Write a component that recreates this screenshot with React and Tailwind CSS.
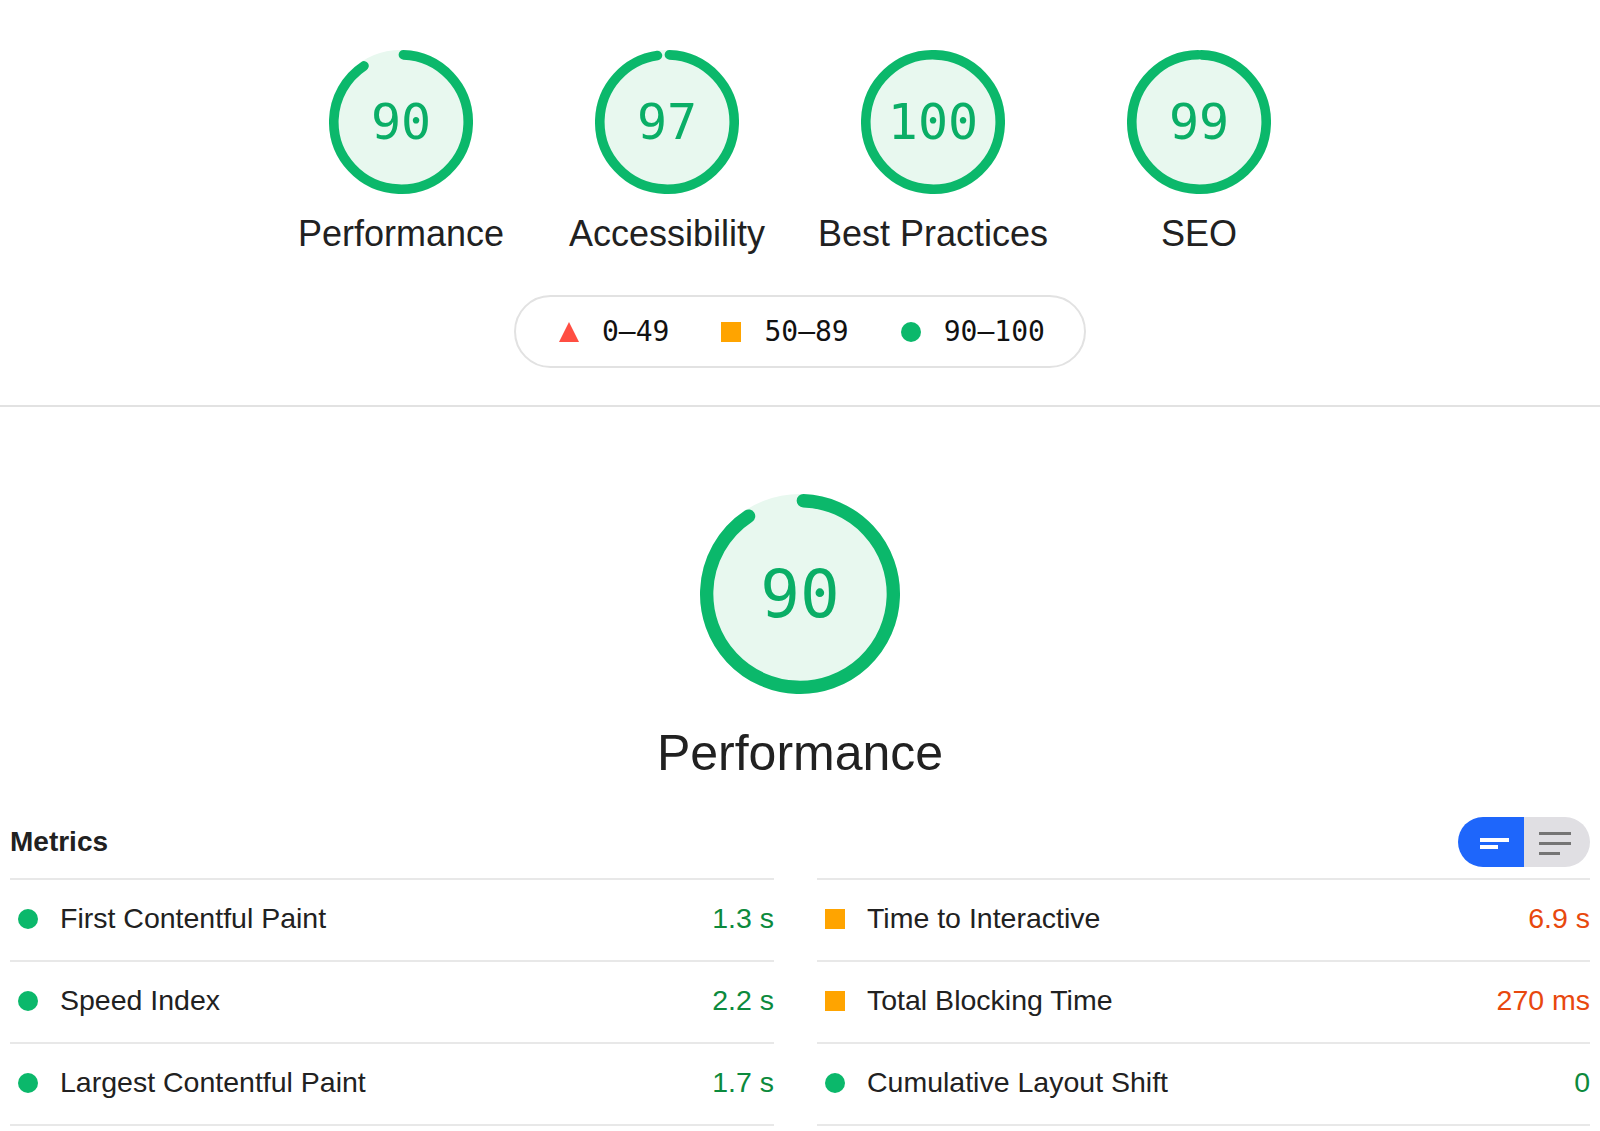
import React from "react";

const C = 2 * Math.PI * 56;

function Gauge({ score, size, numClass }) {
  return (
    <div className={`relative ${size}`}>
      <svg viewBox="0 0 120 120" className="w-full h-full">
        <circle cx="60" cy="60" r="56" fill="#e8f8ef" stroke="#e8f8ef" strokeWidth="8" />
        <circle
          cx="60"
          cy="60"
          r="56"
          fill="none"
          stroke="#0bb86b"
          strokeWidth="8"
          strokeLinecap="round"
          strokeDasharray={`${(score / 100) * C} ${C}`}
          transform="rotate(-87.95 60 60)"
        />
      </svg>
      <div
        className={`absolute inset-0 flex items-center justify-center text-[#0aae66] slashed-zero ${numClass}`}
        style={{ fontFamily: "'DejaVu Sans Mono', monospace" }}
      >
        {score}
      </div>
    </div>
  );
}

const gauges = [
  { score: 90, label: "Performance" },
  { score: 97, label: "Accessibility" },
  { score: 100, label: "Best Practices" },
  { score: 99, label: "SEO" },
];

const left = [
  { label: "First Contentful Paint", value: "1.3 s", kind: "pass" },
  { label: "Speed Index", value: "2.2 s", kind: "pass" },
  { label: "Largest Contentful Paint", value: "1.7 s", kind: "pass" },
];

const right = [
  { label: "Time to Interactive", value: "6.9 s", kind: "avg" },
  { label: "Total Blocking Time", value: "270 ms", kind: "avg" },
  { label: "Cumulative Layout Shift", value: "0", kind: "pass" },
];

function MetricIcon({ kind }) {
  if (kind === "avg") return <div className="w-[20px] h-[20px] bg-[#ffa400] shrink-0" />;
  return <div className="w-[20px] h-[20px] rounded-full bg-[#0bb86b] shrink-0" />;
}

function MetricColumn({ items, className }) {
  return (
    <div className={`flex flex-col border-b-2 border-[#e8e8e8] ${className}`}>
      {items.map((m) => (
        <div
          key={m.label}
          className="h-[82px] border-t-2 border-[#e8e8e8] flex items-center pb-[3px] pl-[8px] text-[28.5px]"
        >
          <MetricIcon kind={m.kind} />
          <span className="ml-[22px] text-[#212121]">{m.label}</span>
          <span
            className={`ml-auto ${m.kind === "avg" ? "text-[#e8480e]" : "text-[#0c8a3d]"}`}
          >
            {m.value}
          </span>
        </div>
      ))}
    </div>
  );
}

export default function App() {
  return (
    <div
      className="w-full min-h-[1131px] bg-white text-[#212121] pt-[50px]"
      style={{ fontFamily: "'Liberation Sans', Arial, sans-serif" }}
    >
      {/* score gauges */}
      <div className="flex justify-center">
        {gauges.map((g) => (
          <div key={g.label} className="w-[266px] flex flex-col items-center">
            <Gauge score={g.score} size="w-[144px] h-[144px]" numClass="text-[50px]" />
            <div className="mt-[18px] text-[36px] leading-[44px] whitespace-nowrap">{g.label}</div>
          </div>
        ))}
      </div>

      {/* legend */}
      <div className="flex justify-center mt-[39px]">
        <div
          className="h-[73px] w-[572px] rounded-full border-2 border-[#e2e2e2] flex items-center pl-[43px] text-[28px] text-[#111] slashed-zero"
          style={{ fontFamily: "'DejaVu Sans Mono', monospace" }}
        >
          <svg viewBox="0 0 20 20" className="w-[20px] h-[20px]">
            <polygon points="10,0 20,20 0,20" fill="#ff4e42" />
          </svg>
          <span className="ml-[23px]">0–49</span>
          <div className="ml-[52px] w-[20px] h-[20px] bg-[#ffa400]" />
          <span className="ml-[23px]">50–89</span>
          <div className="ml-[52px] w-[20px] h-[20px] rounded-full bg-[#0bb86b]" />
          <span className="ml-[23px]">90–100</span>
        </div>
      </div>

      <div className="mt-[37px] h-[2px] bg-[#e2e2e2]" />

      {/* performance */}
      <div className="flex flex-col items-center mt-[87px]">
        <Gauge score={90} size="w-[200px] h-[200px]" numClass="text-[66px]" />
        <div className="mt-[29px] text-[50px] leading-[60px]">Performance</div>
      </div>

      {/* metrics */}
      <div className="px-[10px] mt-[34px]">
        <div className="h-[50px] flex items-center justify-between">
          <div className="text-[28px] font-bold">Metrics</div>
          <div className="flex h-[50px] rounded-full overflow-hidden">
            <div className="w-[66px] bg-[#1e66fb] flex flex-col justify-center pl-[22px] pt-[3px] gap-[3px]">
              <div className="w-[29px] h-[4px] bg-white" />
              <div className="w-[18px] h-[4px] bg-white" />
            </div>
            <div className="w-[66px] bg-[#e0dfe3] flex flex-col justify-center pl-[15px] pt-[2px] gap-[7px]">
              <div className="w-[32px] h-[3px] bg-[#757575]" />
              <div className="w-[32px] h-[3px] bg-[#757575]" />
              <div className="w-[21px] h-[3px] bg-[#757575]" />
            </div>
          </div>
        </div>
        <div className="flex mt-[11px] gap-[43px]">
          <MetricColumn items={left} className="w-[764px]" />
          <MetricColumn items={right} className="flex-1" />
        </div>
      </div>
    </div>
  );
}
